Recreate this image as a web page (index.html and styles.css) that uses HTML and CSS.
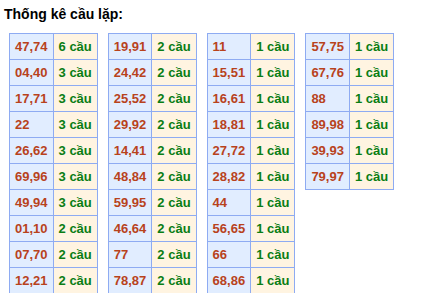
FILE: index.html
```html
<!DOCTYPE html>
<html lang="vi">
<head>
<meta charset="utf-8">
<title>Thống kê cầu lặp</title>
<link rel="stylesheet" href="styles.css">
</head>
<body>
<div class="box">
  <div class="title">Thống kê cầu lặp:</div>
  <div class="tables">
    <table class="tk">
      <tr><td class="num">47,74</td><td class="cnt">6 cầu</td></tr>
      <tr><td class="num">04,40</td><td class="cnt">3 cầu</td></tr>
      <tr><td class="num">17,71</td><td class="cnt">3 cầu</td></tr>
      <tr><td class="num">22</td><td class="cnt">3 cầu</td></tr>
      <tr><td class="num">26,62</td><td class="cnt">3 cầu</td></tr>
      <tr><td class="num">69,96</td><td class="cnt">3 cầu</td></tr>
      <tr><td class="num">49,94</td><td class="cnt">3 cầu</td></tr>
      <tr><td class="num">01,10</td><td class="cnt">2 cầu</td></tr>
      <tr><td class="num">07,70</td><td class="cnt">2 cầu</td></tr>
      <tr><td class="num">12,21</td><td class="cnt">2 cầu</td></tr>
    </table>
    <table class="tk">
      <tr><td class="num">19,91</td><td class="cnt">2 cầu</td></tr>
      <tr><td class="num">24,42</td><td class="cnt">2 cầu</td></tr>
      <tr><td class="num">25,52</td><td class="cnt">2 cầu</td></tr>
      <tr><td class="num">29,92</td><td class="cnt">2 cầu</td></tr>
      <tr><td class="num">14,41</td><td class="cnt">2 cầu</td></tr>
      <tr><td class="num">48,84</td><td class="cnt">2 cầu</td></tr>
      <tr><td class="num">59,95</td><td class="cnt">2 cầu</td></tr>
      <tr><td class="num">46,64</td><td class="cnt">2 cầu</td></tr>
      <tr><td class="num">77</td><td class="cnt">2 cầu</td></tr>
      <tr><td class="num">78,87</td><td class="cnt">2 cầu</td></tr>
    </table>
    <table class="tk">
      <tr><td class="num">11</td><td class="cnt">1 cầu</td></tr>
      <tr><td class="num">15,51</td><td class="cnt">1 cầu</td></tr>
      <tr><td class="num">16,61</td><td class="cnt">1 cầu</td></tr>
      <tr><td class="num">18,81</td><td class="cnt">1 cầu</td></tr>
      <tr><td class="num">27,72</td><td class="cnt">1 cầu</td></tr>
      <tr><td class="num">28,82</td><td class="cnt">1 cầu</td></tr>
      <tr><td class="num">44</td><td class="cnt">1 cầu</td></tr>
      <tr><td class="num">56,65</td><td class="cnt">1 cầu</td></tr>
      <tr><td class="num">66</td><td class="cnt">1 cầu</td></tr>
      <tr><td class="num">68,86</td><td class="cnt">1 cầu</td></tr>
    </table>
    <table class="tk">
      <tr><td class="num">57,75</td><td class="cnt">1 cầu</td></tr>
      <tr><td class="num">67,76</td><td class="cnt">1 cầu</td></tr>
      <tr><td class="num">88</td><td class="cnt">1 cầu</td></tr>
      <tr><td class="num">89,98</td><td class="cnt">1 cầu</td></tr>
      <tr><td class="num">39,93</td><td class="cnt">1 cầu</td></tr>
      <tr><td class="num">79,97</td><td class="cnt">1 cầu</td></tr>
    </table>
  </div>
</div>
</body>
</html>
```
FILE: styles.css
```css
html, body {
  margin: 0;
  padding: 0;
  background: #ffffff;
}
body {
  font-family: "Liberation Sans", Arial, sans-serif;
  font-size: 13px;
}
.box {
  padding: 6px 0 0 4px;
}
.title {
  font-weight: bold;
  font-size: 14px;
  line-height: 17px;
  color: #000000;
  height: 27px;
}
.tables {
  display: flex;
  align-items: flex-start;
  gap: 10px;
  padding-left: 5px;
}
.tk {
  border-collapse: separate;
  border-spacing: 0;
  border-top: 1px solid #8eabf2;
  border-left: 1px solid #8eabf2;
}
.tk td {
  border-right: 1px solid #8eabf2;
  border-bottom: 1px solid #8eabf2;
  height: 26px;
  padding: 0 5px;
  box-sizing: border-box;
  font-weight: bold;
  font-size: 13px;
  white-space: nowrap;
  vertical-align: middle;
}
.tk td.num {
  width: 43px;
  background: #e1edff;
  color: #b8421c;
}
.tk td.cnt {
  width: 44px;
  background: #fff4e1;
  color: #0a7d14;
}
```
